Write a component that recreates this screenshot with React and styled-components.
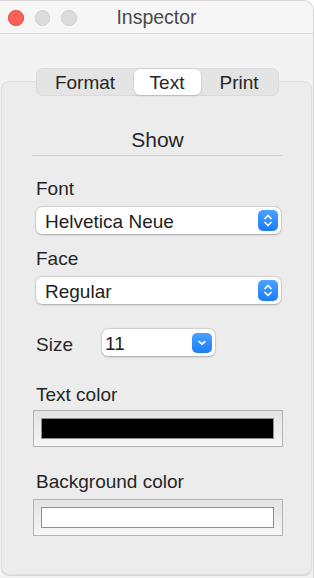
import React from 'react'
import styled, { createGlobalStyle } from 'styled-components'

const Global = createGlobalStyle`
  body {
    margin: 0;
    background: #ffffff;
    font-family: 'Liberation Sans', Arial, sans-serif;
  }
`

const Window = styled.div`
  width: 314px;
  height: 578px;
  box-sizing: border-box;
  display: flex;
  flex-direction: column;
  background: #f3f3f3;
  border-top: 1px solid #d6d6d6;
  border-right: 1px solid #d6d6d6;
  border-top-right-radius: 10px;
  overflow: hidden;
`

const TitleBar = styled.div`
  height: 32px;
  flex: 0 0 auto;
  display: grid;
  grid-template-columns: 1fr auto 1fr;
  align-items: center;
  background: #f6f6f6;
  border-bottom: 1px solid #d9d9d9;
`

const Lights = styled.div`
  display: flex;
  gap: 11px;
  padding-left: 8px;
  margin-top: 2px;
`

const Light = styled.span`
  width: 13.5px;
  height: 13.5px;
  border-radius: 50%;
  background: ${p => p.$color};
  border: 0.5px solid ${p => p.$edge};
`

const Title = styled.div`
  font-size: 19.5px;
  line-height: 32px;
  color: #4a4a4a;
`

const Body = styled.div`
  flex: 1;
  display: flex;
  flex-direction: column;
  padding-top: 34px;
`

const Segmented = styled.div`
  align-self: center;
  margin-left: 1px;
  display: flex;
  height: 28px;
  box-sizing: border-box;
  border: 1px solid #dadada;
  border-radius: 7px;
  background: #e4e4e4;
  margin-bottom: -15px;
  position: relative;
  z-index: 1;
`

const Segment = styled.div`
  width: ${p => p.$w}px;
  height: 26px;
  box-sizing: border-box;
  padding-top: 2px;
  line-height: 24px;
  font-size: 19px;
  text-align: center;
  color: #262626;
  border-radius: 6px;
  background: ${p => (p.$active ? '#ffffff' : 'transparent')};
  box-shadow: ${p =>
    p.$active ? '0 0 0 0.5px rgba(0,0,0,0.08), 0 1px 2px rgba(0,0,0,0.12)' : 'none'};
`

const Panel = styled.div`
  flex: 1;
  margin: 0 1px 3px 1px;
  padding: 45px 28px 0 30px;
  background: #ececec;
  border: 1px solid #dfdfdf;
  border-radius: 8px;
  box-shadow: 0 1px 1px rgba(0, 0, 0, 0.12);
  display: flex;
  flex-direction: column;
`

const Heading = styled.div`
  font-size: 21px;
  line-height: 25px;
  text-align: center;
  color: #262626;
  padding-bottom: 3px;
  border-bottom: 1px solid #d3d3d3;
  margin-bottom: 22px;
`

const Label = styled.div`
  font-size: 19px;
  line-height: 22px;
  color: #262626;
  padding-left: 4px;
  margin-bottom: ${p => p.$gap}px;
`

const Popup = styled.div`
  height: 27px;
  box-sizing: border-box;
  display: flex;
  align-items: center;
  justify-content: space-between;
  padding: 3px 3px 0 ${p => (p.$compact ? 3 : 9)}px;
  margin: 0 2px ${p => p.$gap || 0}px 4px;
  width: ${p => (p.$width ? `${p.$width}px` : 'auto')};
  background: #ffffff;
  border-radius: 6px;
  box-shadow: 0 0 0 0.5px rgba(0, 0, 0, 0.1), 0 0.5px 2px rgba(0, 0, 0, 0.25);
  font-size: 19px;
  color: #1e1e1e;
`

const BlueButton = styled.span`
  width: 20px;
  height: ${p => (p.$h ? p.$h : 21)}px;
  margin-top: -3px;
  border-radius: 5px;
  background: linear-gradient(#4aa3ff, #1b7cf6);
  display: flex;
  align-items: center;
  justify-content: center;
  flex: 0 0 auto;
`

const SizeRow = styled.div`
  display: flex;
  align-items: center;
  margin: 25px 0 28px 0;
`

const SizeLabel = styled.div`
  flex: 0 0 66px;
  box-sizing: border-box;
  padding-left: 4px;
  margin-top: 4px;
  font-size: 19px;
  line-height: 22px;
  color: #262626;
`

const Well = styled.div`
  margin: 0 0 ${p => p.$gap || 0}px 1px;
  padding: 7px 8px 7px 7px;
  border: 1px solid #b3b3b3;
  background: linear-gradient(#e3e3e3, #f6f6f6);
`

const Swatch = styled.div`
  height: 21px;
  box-sizing: border-box;
  border: 1px solid #8f8f8f;
  background: ${p => p.$color};
`

const Stepper = () => (
  <svg width="20" height="21" viewBox="0 0 20 21">
    <path d="M7 8.5 L10 5.5 L13 8.5" fill="none" stroke="#fff" strokeWidth="1.7" strokeLinecap="round" strokeLinejoin="round" />
    <path d="M7 12.5 L10 15.5 L13 12.5" fill="none" stroke="#fff" strokeWidth="1.7" strokeLinecap="round" strokeLinejoin="round" />
  </svg>
)

const Chevron = () => (
  <svg width="20" height="20" viewBox="0 0 20 20">
    <path d="M7.2 8.6 L10 11.2 L12.8 8.6" fill="none" stroke="#fff" strokeWidth="1.8" strokeLinecap="round" strokeLinejoin="round" />
  </svg>
)

const App = () => {
  return <>
    <Global />
    <Window>
      <TitleBar>
        <Lights>
          <Light $color="#fe5f57" $edge="#e2463f" />
          <Light $color="#dcdcdc" $edge="#cfcfcf" />
          <Light $color="#dcdcdc" $edge="#cfcfcf" />
        </Lights>
        <Title>Inspector</Title>
        <div />
      </TitleBar>
      <Body>
        <Segmented>
          <Segment $w={97}>Format</Segment>
          <Segment $w={67} $active>Text</Segment>
          <Segment $w={77}>Print</Segment>
        </Segmented>
        <Panel>
          <Heading>Show</Heading>

          <Label $gap={7}>Font</Label>
          <Popup $gap={14}>
            <span>Helvetica Neue</span>
            <BlueButton><Stepper /></BlueButton>
          </Popup>

          <Label $gap={7}>Face</Label>
          <Popup>
            <span>Regular</span>
            <BlueButton><Stepper /></BlueButton>
          </Popup>

          <SizeRow>
            <SizeLabel>Size</SizeLabel>
            <Popup $compact $width={113}>
              <span>11</span>
              <BlueButton $h={20}><Chevron /></BlueButton>
            </Popup>
          </SizeRow>

          <Label $gap={4}>Text color</Label>
          <Well $gap={24}>
            <Swatch $color="#000000" />
          </Well>

          <Label $gap={6}>Background color</Label>
          <Well>
            <Swatch $color="#ffffff" />
          </Well>
        </Panel>
      </Body>
    </Window>
  </>
}

export default App
